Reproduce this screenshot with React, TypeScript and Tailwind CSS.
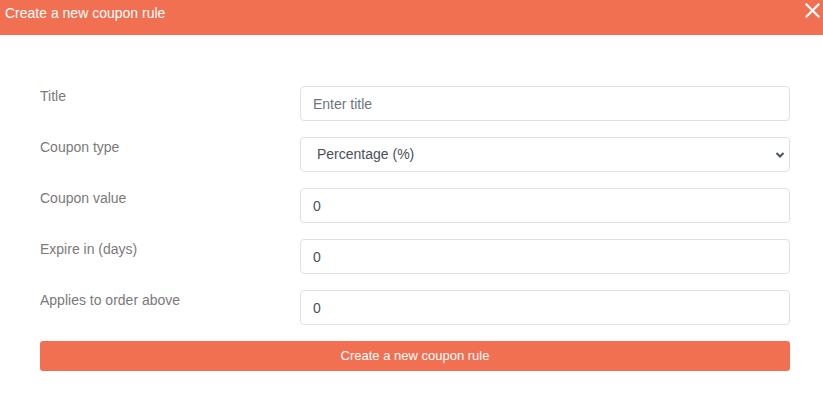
import React from "react";

const fields = [
  { label: "Title", placeholder: "Enter title", value: "" },
  { label: "Coupon type", select: true },
  { label: "Coupon value", value: "0" },
  { label: "Expire in (days)", value: "0" },
  { label: "Applies to order above", value: "0" },
];

export default function App() {
  return (
    <div className="w-[823px] h-[393px] bg-white relative" style={{ fontFamily: "'Liberation Sans', Arial, sans-serif" }}>
      <div className="h-[35px] bg-[#f27052] pl-[5px] pt-[5px]">
        <span className="text-white text-[14px] leading-[16px] block">Create a new coupon rule</span>
      </div>
      <button className="absolute right-[2px] top-[1px] w-[18px] h-[18px] flex items-center justify-center">
        <svg width="15" height="15" viewBox="0 0 15 15">
          <path d="M1.5 1.5 L13.5 13.5 M13.5 1.5 L1.5 13.5" stroke="white" strokeWidth="2.2" strokeLinecap="square" />
        </svg>
      </button>
      <div className="pt-[51px] pl-[40px] pr-[33px] flex flex-col gap-[16px]">
        {fields.map((f) => (
          <div key={f.label} className="flex">
            <div className="w-[260px] text-[14px] text-[#7a7a7a] leading-[20px]">{f.label}</div>
            {f.select ? (
              <div className="relative w-[490px] h-[35px] border border-[#dee2e6] rounded-[4px] flex items-center pl-[16px] text-[14px] text-[#495057]">
                Percentage (%)
                <svg className="absolute right-[4px] top-[13px]" width="10" height="8" viewBox="0 0 10 8">
                  <path d="M1.5 2 L5 5.5 L8.5 2" stroke="#4a5560" strokeWidth="2" fill="none" />
                </svg>
              </div>
            ) : (
              <input
                className="w-[490px] h-[35px] border border-[#dee2e6] rounded-[4px] px-[12px] text-[14px] text-[#495057] placeholder:text-[#6c757d] outline-none"
                placeholder={f.placeholder}
                defaultValue={f.value}
              />
            )}
          </div>
        ))}
        <button className="w-[750px] h-[30px] bg-[#f27052] rounded-[3px] text-white text-[13px]">Create a new coupon rule</button>
      </div>
    </div>
  );
}
